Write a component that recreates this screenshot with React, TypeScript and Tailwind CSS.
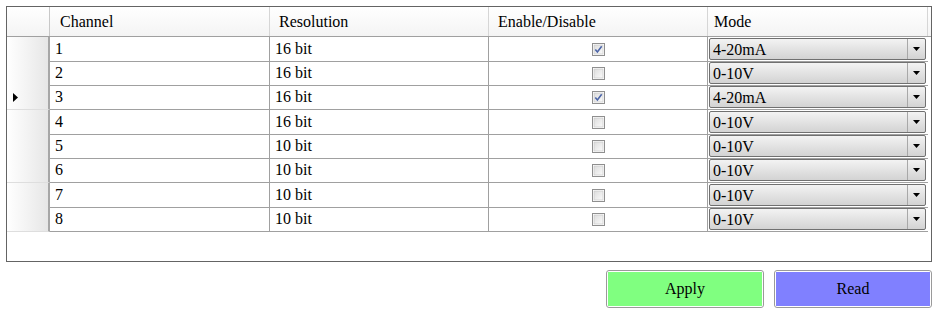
import React from "react";

const rows = [
  { ch: "1", res: "16 bit", on: true, mode: "4-20mA" },
  { ch: "2", res: "16 bit", on: false, mode: "0-10V" },
  { ch: "3", res: "16 bit", on: true, mode: "4-20mA" },
  { ch: "4", res: "16 bit", on: false, mode: "0-10V" },
  { ch: "5", res: "10 bit", on: false, mode: "0-10V" },
  { ch: "6", res: "10 bit", on: false, mode: "0-10V" },
  { ch: "7", res: "10 bit", on: false, mode: "0-10V" },
  { ch: "8", res: "10 bit", on: false, mode: "0-10V" },
];

const current = 2;

function CheckBox({ checked }: { checked: boolean }) {
  return (
    <svg width="13" height="13" viewBox="0 0 13 13">
      <defs>
        <linearGradient id="cbg" x1="0" y1="0" x2="1" y2="1">
          <stop offset="0" stopColor="#dcdcdc" />
          <stop offset="1" stopColor="#fbfbfb" />
        </linearGradient>
      </defs>
      <rect x="0.5" y="0.5" width="12" height="12" fill="#fff" stroke="#8f8f8f" />
      <rect x="2" y="2" width="9" height="9" fill="url(#cbg)" stroke="#c4c4c4" strokeWidth="0.6" />
      {checked && (
        <path d="M3.3 6.4 L5.4 9 L9.7 3.2" fill="none" stroke="#4d66a8" strokeWidth="1.6" />
      )}
    </svg>
  );
}

function Combo({ value }: { value: string }) {
  return (
    <div className="flex h-[22px] ml-px mr-[2px] mt-px border border-[#707070] rounded-[2px] bg-gradient-to-b from-[#f3f3f3] to-[#d3d3d3]">
      <div className="flex-1 pl-[3px] leading-[21px]">{value}</div>
      <div className="w-[18px] border-l border-[#a8a8a8] flex items-center justify-center">
        <svg width="7" height="4" viewBox="0 0 7 4">
          <path d="M0 0 H7 L3.5 4 Z" fill="#000" />
        </svg>
      </div>
    </div>
  );
}

export default function App() {
  return (
    <div className="w-[937px] h-[314px] bg-white text-[16px] text-black font-['Liberation_Serif','Times_New_Roman',serif]">
      <div className="ml-[6px] pt-[6px]">
        <div className="w-[926px] h-[256px] border border-[#646464] bg-white">
          <div className="grid grid-cols-[43px_220px_219px_219px_220px] h-[30px] bg-gradient-to-b from-white to-[#f4f4f4] border-b border-[#a0a0a0]">
            <div className="border-r border-[#c8c8c8]" />
            <div className="pl-[10px] leading-[29px] border-r border-[#d6d6d6]">Channel</div>
            <div className="pl-[9px] leading-[29px] border-r border-[#d6d6d6]">Resolution</div>
            <div className="pl-[9px] leading-[29px] border-r border-[#d6d6d6]">Enable/Disable</div>
            <div className="pl-[6px] leading-[29px] border-r border-[#d6d6d6]">Mode</div>
          </div>
          {rows.map((r, i) => (
            <div
              key={r.ch}
              className={
                i === 2 || i === 5
                  ? "grid grid-cols-[43px_220px_219px_219px_220px] h-[25px]"
                  : "grid grid-cols-[43px_220px_219px_219px_220px] h-[24px]"
              }
            >
              <div className="flex items-center pl-[6px] border-r-[2px] border-[#a6a6a6] border-b border-b-[#dedede] bg-gradient-to-r from-white via-[#f3f3f3] to-[#e6e6e6]">
                {i === current && (
                  <svg width="5" height="9" viewBox="0 0 5 9">
                    <path d="M0 0 L5 4.5 L0 9 Z" fill="#000" />
                  </svg>
                )}
              </div>
              <div className="pl-[5px] flex items-center border-r border-b border-[#a0a0a0]">{r.ch}</div>
              <div className="pl-[5px] flex items-center border-r border-b border-[#a0a0a0]">{r.res}</div>
              <div className="flex items-center justify-center border-r border-b border-[#a0a0a0]">
                <CheckBox checked={r.on} />
              </div>
              <div className="flex flex-col border-b border-[#a0a0a0]">
                <Combo value={r.mode} />
              </div>
            </div>
          ))}
        </div>
      </div>
      <div className="flex justify-end gap-[10px] mt-[8px] mr-[5px]">
        <button className="w-[158px] h-[38px] rounded-[3px] border border-[#9a9a9a] p-px bg-white">
          <div className="w-full h-full bg-[#80ff80] flex items-center justify-center">Apply</div>
        </button>
        <button className="w-[158px] h-[38px] rounded-[3px] border border-[#9a9a9a] p-px bg-white">
          <div className="w-full h-full bg-[#8080ff] flex items-center justify-center">Read</div>
        </button>
      </div>
    </div>
  );
}
